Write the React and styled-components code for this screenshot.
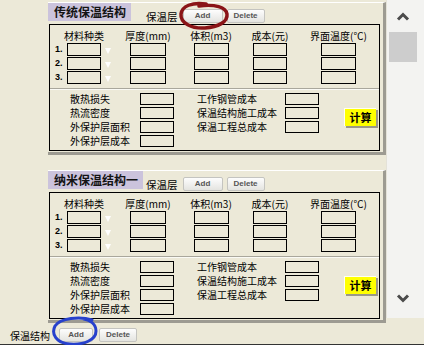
import styled, { createGlobalStyle } from "styled-components";

const GlobalStyle = createGlobalStyle`
  html, body {
    margin: 0;
    padding: 0;
    background: #ECE9D8;
    overflow: hidden;
  }
  body {
    font-family: "Noto Sans CJK SC", "Liberation Sans", sans-serif;
    color: #000;
  }
`;

const Frame = styled.div`
  position: relative;
  width: 424px;
  height: 345px;
  box-sizing: border-box;
  border-bottom: 1px solid #333;
  background: #ECE9D8;
  display: flex;
  flex-direction: column;
`;

const Main = styled.div`
  display: flex;
  height: 324px;
`;

const Pane = styled.div`
  width: 386px;
  padding-left: 48px;
  box-sizing: border-box;
  display: flex;
  flex-direction: column;
  gap: 15px;
`;

const Card = styled.div`
  width: 338px;
  box-sizing: border-box;
  border-top: 1px solid #fff;
  border-right: 3px solid #9d9b92;
  border-bottom: 3px solid #9d9b92;
  padding: 0 3px 1px 1px;
  margin-top: ${(p) => p.$top || 0}px;
  background: #ECE9D8;
`;

const HeaderRow = styled.div`
  display: grid;
  grid-template-columns: 97px max-content max-content max-content 1fr;
  align-items: start;
  height: 21px;
`;

const Title = styled.div`
  justify-self: start;
  margin-left: -1px;
  height: 18px;
  line-height: 18px;
  padding: 0 5px 0 6px;
  background: #CBC3DC;
  font-size: 12px;
  font-weight: 700;
  color: #141414;
`;

const LayerLabel = styled.span`
  margin-top: 8px;
  font-size: 10.5px;
  line-height: 12px;
`;

const SmallButton = styled.div`
  margin-top: ${(p) => (p.$mt === undefined ? 6 : p.$mt)}px;
  margin-left: ${(p) => p.$ml || 0}px;
  width: ${(p) => p.$w}px;
  height: 14px;
  box-sizing: border-box;
  border: 1px solid #c4c4c0;
  border-radius: 2px;
  background: linear-gradient(#fdfdfd, #e4e4e0);
  font-family: "Liberation Sans", sans-serif;
  font-size: 8px;
  font-weight: 700;
  color: #555;
  line-height: 12px;
  text-align: center;
`;

const Inner = styled.div`
  width: 331px;
  box-sizing: border-box;
  border: 1px solid #000;
`;

const TopSection = styled.div`
  padding: 4px 0 4px;
  display: flex;
  flex-direction: column;
  gap: 1px;
`;

const HeadRow = styled.div`
  display: flex;
  height: 13px;
`;

const HeadCell = styled.div`
  width: 56px;
  margin-left: ${(p) => p.$ml}px;
  text-align: center;
  font-size: 10px;
  line-height: 13px;
  white-space: nowrap;
`;

const InputRow = styled.div`
  display: flex;
  height: 13px;
`;

const RowNum = styled.div`
  width: 12px;
  padding-left: 5px;
  font-family: "Liberation Sans", sans-serif;
  font-size: 9px;
  font-weight: 700;
  line-height: 12px;
`;

const Field = styled.div`
  width: ${(p) => p.$w}px;
  height: 13px;
  margin-left: ${(p) => p.$ml || 0}px;
  box-sizing: border-box;
  border: 1px solid #000;
`;

const DropSlot = styled.div`
  width: 29px;
  display: flex;
  align-items: flex-end;
  padding-bottom: 2px;
  box-sizing: border-box;
`;

const DropArrow = styled.div`
  margin-left: 4px;
  width: 0;
  height: 0;
  border-left: 3.5px solid transparent;
  border-right: 3.5px solid transparent;
  border-top: 6px solid #fff;
`;

const Divider = styled.div`
  height: 0;
  border-top: 1px solid #a9a79c;
  border-bottom: 1px solid #fafaf5;
`;

const BottomSection = styled.div`
  display: flex;
  align-items: flex-start;
  padding: 3px 0 3px 20px;
`;

const FieldGrid = styled.div`
  display: grid;
  grid-template-columns: ${(p) => p.$label}px 34px;
  grid-auto-rows: 12px;
  row-gap: 2px;
  margin-left: ${(p) => p.$ml || 0}px;
`;

const Label = styled.div`
  font-size: 10px;
  line-height: 12px;
  white-space: nowrap;
`;

const OutField = styled.div`
  height: 12px;
  box-sizing: border-box;
  border: 1px solid #000;
`;

const CalcButton = styled.div`
  margin: 15px 0 0 25px;
  width: 32px;
  height: 18px;
  box-sizing: border-box;
  background: #ffff00;
  border-top: 1px solid #fffff0;
  border-left: 1px solid #fffff0;
  box-shadow: 2px 2px 0 #9a9888;
  text-align: center;
  font-size: 11px;
  font-weight: 700;
  line-height: 17px;
`;

const Scrollbar = styled.div`
  width: 38px;
  height: 318px;
  background: #f3f3f1;
  border-left: 1px solid #e4e2d8;
  box-sizing: border-box;
  display: flex;
  flex-direction: column;
  padding-right: 6px;
`;

const ArrowBox = styled.div`
  height: ${(p) => p.$h}px;
  display: flex;
  align-items: center;
  justify-content: center;
`;

const Thumb = styled.div`
  height: 30px;
  margin: 0 1px 0 2px;
  background: #cdcdcd;
`;

const Track = styled.div`
  flex: 1;
`;

const BottomBar = styled.div`
  display: flex;
  align-items: flex-start;
  padding: 4px 0 0 10px;
`;

const BarLabel = styled.span`
  margin-top: 2px;
  margin-right: 9px;
  font-size: 10px;
  line-height: 12px;
`;

const Marks = styled.svg`
  position: absolute;
  left: 0;
  top: 0;
  pointer-events: none;
`;

function Chevron({ up }) {
  return (
    <svg width="14" height="9" viewBox="0 0 14 9">
      <polyline
        points={up ? "2,7.5 7,2.5 12,7.5" : "2,1.5 7,6.5 12,1.5"}
        fill="none"
        stroke="#4b4b4b"
        strokeWidth="3"
      />
    </svg>
  );
}

const heads = [
  { t: "材料种类", ml: 6 },
  { t: "厚度(mm)", ml: 8 },
  { t: "体积(m3)", ml: 7 },
  { t: "成本(元)", ml: 3 },
  { t: "界面温度(℃)", ml: 12 },
];

const leftRows = ["散热损失", "热流密度", "外保护层面积", "外保护层成本"];
const rightRows = ["工作钢管成本", "保温结构施工成本", "保温工程总成本"];

function Structure({ title, top }) {
  return (
    <Card $top={top}>
      <HeaderRow>
        <Title>{title}</Title>
        <LayerLabel>保温层</LayerLabel>
        <SmallButton $w={40} $ml={5}>Add</SmallButton>
        <SmallButton $w={38} $ml={4}>Delete</SmallButton>
      </HeaderRow>
      <Inner>
        <TopSection>
          <HeadRow>
            {heads.map((h) => (
              <HeadCell key={h.t} $ml={h.ml}>{h.t}</HeadCell>
            ))}
          </HeadRow>
          {[1, 2, 3].map((n) => (
            <InputRow key={n}>
              <RowNum>{n}.</RowNum>
              <Field $w={34} />
              <DropSlot>
                <DropArrow />
              </DropSlot>
              <Field $w={36} />
              <Field $w={35} $ml={28} />
              <Field $w={34} $ml={24} />
              <Field $w={35} $ml={34} />
            </InputRow>
          ))}
        </TopSection>
        <Divider />
        <BottomSection>
          <FieldGrid $label={70}>
            {leftRows.map((r) => [
              <Label key={r}>{r}</Label>,
              <OutField key={r + "f"} />,
            ])}
          </FieldGrid>
          <FieldGrid $label={88} $ml={23}>
            {rightRows.map((r) => [
              <Label key={r}>{r}</Label>,
              <OutField key={r + "f"} />,
            ])}
          </FieldGrid>
          <CalcButton>计算</CalcButton>
        </BottomSection>
      </Inner>
    </Card>
  );
}

export default function App() {
  return (
    <Frame>
      <GlobalStyle />
      <Main>
        <Pane>
          <Structure title="传统保温结构" top={2} />
          <Structure title="纳米保温结构一" />
        </Pane>
        <Scrollbar>
          <ArrowBox $h={32}>
            <Chevron up />
          </ArrowBox>
          <Thumb />
          <Track />
          <ArrowBox $h={40}>
            <Chevron />
          </ArrowBox>
        </Scrollbar>
      </Main>
      <BottomBar>
        <BarLabel>保温结构</BarLabel>
        <SmallButton $w={34} $mt={0}>Add</SmallButton>
        <SmallButton $w={38} $ml={6} $mt={0}>Delete</SmallButton>
      </BottomBar>
      <Marks width="424" height="345" viewBox="0 0 424 345">
        <path
          d="M206 4 C192 2 182 6 181 14 C180 23 192 29 205 28 C218 27 228 22 227 14 C226 7 215 4 199 6"
          fill="none"
          stroke="#8a1417"
          strokeWidth="3.5"
          strokeLinecap="round"
        />
        <path
          d="M92 320 C80 316 60 318 55 326 C51 334 56 343 70 344 C84 345 96 340 96 331 C96 324 90 320 84 319"
          fill="none"
          stroke="#2741cc"
          strokeWidth="3"
          strokeLinecap="round"
        />
      </Marks>
    </Frame>
  );
}
